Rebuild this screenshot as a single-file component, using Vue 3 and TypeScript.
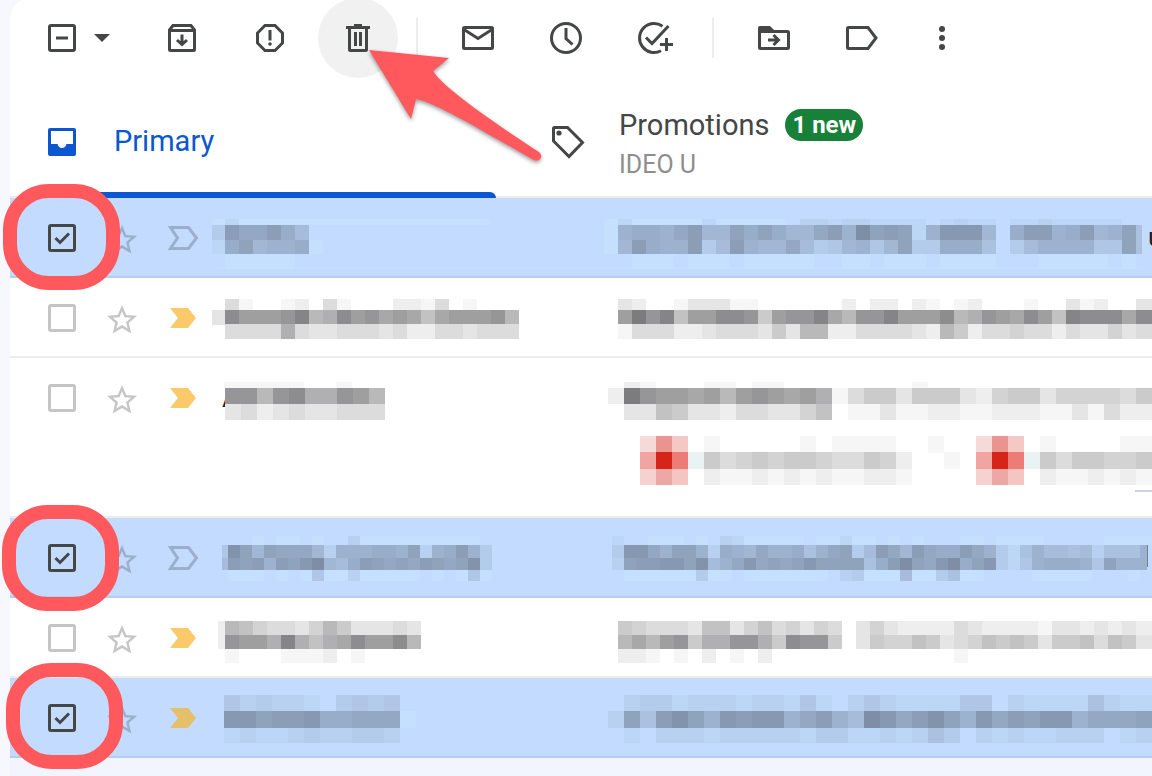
<script setup lang="ts">
import { ref } from 'vue'

interface Strip { x: number; y: number; h: number; cell: number; shades: string }
interface Mail {
  id: number
  selected: boolean
  important: boolean
  tall?: boolean
  ringShift?: string
  senderText?: string
  subjectText?: string
  sender: Strip[]
  subject: Strip[]
}

// Each character of a strip is one block: a hex digit for its darkness,
// "+" for a highlight, or a named tint from the table below.
const s = (x: number, y: number, h: number, cell: number, shades: string): Strip => ({ x, y, h, cell, shades })

const tints: Record<string, string> = {
  P: '#f6d9d9', Q: '#e9948f', R: '#f4c8c4',
  S: '#f1a5a0', T: '#d62418', U: '#eb7c76',
  V: '#f5d2d0', W: '#eda8a6', X: '#f5c5c3',
  Z: '#e9f3f4', L: '#d0d3df', K: '#75808f',
}

function shade(ch: string, selected: boolean): string {
  if (tints[ch]) return tints[ch]
  if (ch === '+') return '#c5dfff'
  const t = parseInt(ch, 16) / 15
  const from = selected ? [193, 219, 253] : [255, 255, 255]
  const to = selected ? [125, 142, 166] : [124, 124, 126]
  return `rgb(${from.map((v, i) => Math.round(v + (to[i] - v) * t)).join(',')})`
}

function blocks(strips: Strip[], selected: boolean) {
  return strips.flatMap((st) =>
    [...st.shades]
      .map((ch, i) => ({ ch, x: st.x + i * st.cell, y: st.y, w: st.cell, h: st.h }))
      .filter((b) => b.ch !== '0')
      .map((b) => ({ ...b, fill: shade(b.ch, selected) })),
  )
}

const mails = ref<Mail[]>([
  {
    id: 1, selected: true, important: false, ringShift: 'a', subjectText: 'u',
    sender: [
      s(-1, 21, 6, 14, '+1++++++++++++++++++'),
      s(-1, 27, 15, 14, '3caac96'),
      s(-1, 42, 14, 14, '19b7889+'),
      s(-1, 56, 14, 14, '0+++++'),
      s(1, 70, 1, 391, '+'),
    ],
    subject: [
      s(0, 21, 6, 14, '+1+++++1+++++0221221111012110112111110'),
      s(0, 27, 15, 14, '+8998ac77b9b977ac8fbcb18ddd709cc89c78b'),
      s(0, 42, 14, 14, '+7c988c36c877a6347847b339995036888844b'),
      s(532, 27, 29, 6, '5'),
      s(0, 56, 14, 14, '00+++0+++0+++++00++0+++0++++000+++++0+'),
      s(0, 70, 1, 538, '+'),
    ],
  },
  {
    id: 2, selected: false, important: true,
    sender: [
      s(-1, 21, 11, 14, '0410012041000221401000'),
      s(-1, 32, 15, 14, '3dbbbce89dbcaba7abbbc8'),
      s(-1, 46, 15, 14, '0444494334443422443444'),
    ],
    subject: [
      s(0, 21, 11, 14, '0320013331100000020220210120001003120033'),
      s(0, 32, 15, 14, '0bfce7bbddc6bccea8ccebbbd89cbadb7edddadd'),
      s(0, 46, 15, 14, '0144422344436388224444328624454424335344'),
    ],
  },
  {
    id: 3, selected: false, important: true, tall: true, senderText: 'A',
    sender: [
      s(12, 24, 6, 16, '1111100100'),
      s(13, 30, 16, 16, 'cc8cd99cb8'),
      s(13, 46, 16, 16, '3423433444'),
    ],
    subject: [
      s(4, 24, 6, 16, '0210001101100000000100'),
      s(4, 30, 16, 16, '2fcbbab8bcbab91466366632566355554666'),
      s(4, 46, 16, 16, '0337633244335701131122112221131422'),
      s(4, 78, 17, 16, '00PQR010000010111100100PQR01000011'),
      s(4, 94, 17, 16, '00STUZ64565665446520010STUZ6466556'),
      s(4, 111, 16, 16, '00VWX021121212112210000VWX02112121'),
      s(531, 132, 2, 40, 'L'),
    ],
  },
  {
    id: 4, selected: true, important: false, ringShift: 'b',
    sender: [
      s(10, 27, 13, 6, '4'), s(10, 40, 12, 6, '6'),
      s(16, 18, 9, 12, '00+0++0+002++++++++++'),
      s(16, 27, 13, 12, 'eb7baaa72888998b289c83'),
      s(16, 40, 12, 12, 'cbc8cbdf769cbabacbabe3'),
      s(16, 52, 11, 12, '+++0+0+4++2+++++0+0+4+'),
    ],
    subject: [
      s(8, 18, 9, 12, '100+++0+021+++++0++1++0+0+000++0++++00000++++'),
      s(8, 27, 13, 12, '3dda8bb82987a88958ab36ca7ca99ca8315866562555'),
      s(8, 40, 12, 12, '2bccddbe68adababdbbbb59cfbadf9bd314899984b88'),
      s(8, 52, 11, 12, '0++++++3++0+++++++023+++6++35++0000+++++000+'),
      s(536, 27, 25, 7, '8'),
      s(543, 27, 22, 1, 'K'),
    ],
  },
  {
    id: 5, selected: false, important: true,
    sender: [
      s(6, 23, 28, 7, '2'),
      s(13, 23, 14, 14, '87544358633343'),
      s(13, 37, 14, 14, 'cbb9e979adbbd8'),
      s(13, 51, 14, 14, '10001112010000'),
    ],
    subject: [
      s(0, 23, 14, 14, '0654443773574535403532222432222133232322'),
      s(0, 37, 14, 14, '08a8bc699cc96dcc603655763457676366747633'),
      s(0, 51, 14, 14, '022101020102000000000000010000000000000'),
    ],
  },
  {
    id: 6, selected: true, important: true, ringShift: 'c',
    sender: [
      s(12, 17, 16, 16, '42322103434'),
      s(12, 33, 17, 16, 'ddbccd99aaa+'),
      s(12, 50, 15, 16, '12112322332'),
    ],
    subject: [
      s(4, 17, 16, 16, '0233122212214102421111440211115211'),
      s(4, 33, 17, 16, '2b5ceb8dcdd8ac86fdaceb8dacbdd8aaab'),
      s(4, 50, 15, 16, '0102221222221331121253021211222012'),
    ],
  },
])
</script>

<template>
  <main class="page">
    <section class="panel">
      <div class="toolbar" role="toolbar" aria-label="Message actions">
        <span class="check">
          <input type="checkbox" aria-label="Select messages" />
          <svg viewBox="0 0 28 28"><path d="M8 14H20" /></svg>
        </span>
        <button class="caret" aria-label="Select options">
          <svg viewBox="0 0 16 8"><path d="M0 0H16L8 8Z" /></svg>
        </button>
        <button class="tool first" aria-label="Archive">
          <svg viewBox="0 0 40 40">
            <path d="M7.5 12L11 7.5H29L32.5 12V31.5Q32.5 32.5 31.5 32.5H8.5Q7.5 32.5 7.5 31.5ZM7.5 12.5H32.5" />
            <path d="M20 16.5V26M15 22L20 26.5L25 22" />
          </svg>
        </button>
        <button class="tool" aria-label="Report spam">
          <svg viewBox="0 0 40 40">
            <path d="M15 7.5H25L32.5 15V25L25 32.5H15L7.5 25V15Z" />
            <path d="M20 12V22.500" />
            <circle class="solid" cx="20" cy="26" r="1.800" />
          </svg>
        </button>
        <button class="tool hovered" aria-label="Delete">
          <svg viewBox="0 0 40 40">
            <path class="solid" d="M16 6H24V8H32V11H8V8H16Z" />
            <path d="M11.500 10V31.500Q11.500 32.500 12.500 32.500H27.500Q28.500 32.500 28.500 31.500V10M17.500 14V28M22.500 14V28" />
          </svg>
        </button>
        <span class="divider"></span>
        <button class="tool" aria-label="Mark as unread">
          <svg viewBox="0 0 40 40">
            <rect x="5.500" y="9.500" width="29" height="21" rx="1" />
            <path d="M6 11.500L20 20.500L34 11.500" />
          </svg>
        </button>
        <button class="tool" aria-label="Snooze">
          <svg viewBox="0 0 40 40">
            <circle cx="20" cy="20" r="14.500" />
            <path d="M20 10V20.500L26.500 26.500" />
          </svg>
        </button>
        <button class="tool" aria-label="Add to tasks">
          <svg viewBox="0 0 40 40">
            <path d="M28.500 8.200A14.500 14.500 0 1 0 27 32.700" />
            <path d="M12 19.500L18 25.500L34.500 8" />
            <path d="M32.500 20V33M26 26.500H39" />
          </svg>
        </button>
        <span class="divider"></span>
        <button class="tool" aria-label="Move to">
          <svg viewBox="0 0 40 40">
            <path class="solid" d="M6 8H16L20 12V14H4V10Q4 8 6 8Z" />
            <path d="M5.500 12V29.500Q5.500 30.500 6.500 30.500H33.500Q34.500 30.500 34.500 29.500V14.500Q34.500 13.500 33.500 13.500H5.500" />
            <path d="M14 22H24M19.500 17L24.500 22L19.500 27" />
          </svg>
        </button>
        <button class="tool" aria-label="Labels">
          <svg viewBox="0 0 40 40">
            <path d="M6.500 9.500H26L34 20L26 30.500H6.500Q5.500 30.500 5.500 29.500V10.500Q5.500 9.500 6.500 9.500Z" />
          </svg>
        </button>
        <button class="tool more" aria-label="More">
          <svg viewBox="0 0 40 40">
            <g class="solid"><circle cx="20" cy="11" r="3" /><circle cx="20" cy="20" r="3" /><circle cx="20" cy="29" r="3" /></g>
          </svg>
        </button>
      </div>

      <div class="tabs" role="tablist">
        <button class="tab primary" role="tab" aria-selected="true">
          <svg viewBox="0 0 32 32">
            <path fill-rule="evenodd" d="M4 2H28Q30 2 30 4V28Q30 30 28 30H4Q2 30 2 28V4Q2 2 4 2ZM5 5V18H11.500Q12.500 22 16 22Q19.500 22 20.500 18H27V5Z" />
          </svg>
          <span class="name">Primary</span>
        </button>
        <button class="tab promotions" role="tab" aria-selected="false">
          <svg viewBox="0 0 34 34">
            <path d="M3.500 2.500H16.500L31.500 17.500L18 31.500L2.500 16V3.500Q2.500 2.500 3.500 2.500Z" />
            <circle cx="8" cy="8" r="2.600" />
          </svg>
          <span class="words">
            <span class="line"><span class="name">Promotions</span><span class="badge">1 new</span></span>
            <span class="sub">IDEO U</span>
          </span>
        </button>
      </div>

      <ul class="list">
        <li v-for="m in mails" :key="m.id" class="row" :class="{ selected: m.selected, tall: m.tall }">
          <span class="check cell">
            <input v-model="m.selected" type="checkbox" :aria-label="`Select message ${m.id}`" />
            <svg v-if="m.selected" viewBox="0 0 28 28"><path d="M7.500 14L12 18.500L21 9.500" /></svg>
          </span>
          <button class="cell star" aria-label="Star">
            <svg viewBox="0 0 24 24">
              <path d="M22 9.240l-7.190-.62L12 2 9.190 8.630 2 9.240l5.460 4.730L5.820 21 12 17.270 18.180 21l-1.630-7.030L22 9.240zM12 15.400l-3.760 2.270 1-4.280-3.320-2.880 4.380-.38L12 6.100l1.710 4.040 4.380.38-3.320 2.880 1 4.280L12 15.400z" />
            </svg>
          </button>
          <button class="cell marker" :class="{ important: m.important }" aria-label="Importance">
            <svg viewBox="0 0 34 28">
              <path v-if="m.important" d="M4 4H22L30 14L22 24H4L12 14Z" />
              <path v-else d="M4.500 3.500H22.500L30.500 14L22.500 24.500H4.500L11.500 14Z" />
            </svg>
          </button>
          <svg class="lane" role="img" aria-label="Sender">
            <text v-if="m.senderText" x="10" y="49">{{ m.senderText }}</text>
            <rect v-for="(b, i) in blocks(m.sender, m.selected)" :key="i" :x="b.x" :y="b.y" :width="b.w" :height="b.h" :fill="b.fill" />
          </svg>
          <svg class="lane" role="img" aria-label="Subject">
            <rect v-for="(b, i) in blocks(m.subject, m.selected)" :key="i" :x="b.x" :y="b.y" :width="b.w" :height="b.h" :fill="b.fill" />
            <text v-if="m.subjectText" x="544" y="48">{{ m.subjectText }}</text>
          </svg>
          <span v-if="m.ringShift" class="ring" :class="m.ringShift"></span>
        </li>
      </ul>

      <svg class="pointer" viewBox="0 0 184 124" aria-hidden="true">
        <path d="M15 6L95 14L79 27C90 44 136 76 185 108Q189 112 186 115Q183 118 178 115C130 88 85 60 62 55L57 75Z" />
      </svg>
    </section>
  </main>
</template>

<style>
body {
  margin: 0;
  background: #f6f8fd;
}
</style>

<style scoped>
.page {
  box-sizing: border-box;
  display: flex;
  min-height: 100vh;
  padding-left: 10px;
  background: #f6f8fd;
  font-family: Roboto, "Liberation Sans", sans-serif;
  color: #444746;
}
.panel {
  position: relative;
  flex: 1;
  min-width: 0;
  background: #f2f5fd;
  border-top-left-radius: 14px 22px;
}
button {
  display: block;
  padding: 0;
  border: 0;
  background: none;
  color: inherit;
  font: inherit;
  text-align: left;
}
svg {
  display: block;
}
.toolbar {
  display: flex;
  align-items: center;
  height: 76px;
  padding-left: 38px;
  background: #fff;
  border-top-left-radius: 14px 22px;
}
.check {
  display: grid;
  width: 28px;
  height: 28px;
}
.check > * {
  grid-area: 1 / 1;
  width: 28px;
  height: 28px;
}
.check input {
  box-sizing: border-box;
  margin: 0;
  appearance: none;
  border: 3px solid #444746;
  border-radius: 3px;
}
.check svg {
  position: relative;
  pointer-events: none;
  fill: none;
  stroke: #444746;
  stroke-width: 3;
}
.caret {
  width: 16px;
  margin-left: 18px;
}
.caret svg {
  width: 16px;
  height: 8px;
  fill: #444746;
}
.tool {
  flex: none;
  display: grid;
  place-items: center;
  width: 80px;
  height: 80px;
  margin-right: 8px;
  border-radius: 50%;
}
.tool.first {
  margin-left: 32px;
}
.tool.hovered {
  background: #f1f1f1;
}
.tool.more {
  margin-left: -8px;
}
.tool svg {
  width: 40px;
  height: 40px;
  fill: none;
  stroke: #444746;
  stroke-width: 3;
}
.tool .solid {
  fill: #444746;
  stroke: none;
}
.divider {
  flex: none;
  width: 2px;
  height: 40px;
  margin: 0 20px 0 10px;
  background: #ececec;
}
.tabs {
  display: flex;
  height: 122px;
  background: #fff;
  box-shadow: inset 0 -2px #ececec;
}
.tab {
  position: relative;
  display: flex;
  align-items: center;
  font-size: 29px;
  line-height: 32px;
}
.primary {
  width: 504px;
  padding: 0 0 0 36px;
  color: #0b57d0;
}
.primary::after {
  content: "";
  position: absolute;
  left: 38px;
  right: 18px;
  bottom: 0;
  height: 6px;
  border-radius: 0 6px 0 0;
  background: #0b57d0;
}
.primary svg {
  width: 32px;
  height: 32px;
  margin: 10px 36px 0 0;
  fill: #0b57d0;
}
.primary .name {
  padding-top: 8px;
}
.promotions {
  padding-left: 37px;
}
.promotions svg {
  width: 34px;
  height: 34px;
  margin: 10px 34px 0 0;
  fill: none;
  stroke: #444746;
  stroke-width: 3;
}
.promotions circle {
  fill: #444746;
  stroke: none;
}
.words {
  display: flex;
  flex-direction: column;
  gap: 8px;
  padding-top: 16px;
}
.line {
  display: flex;
  align-items: center;
  gap: 16px;
}
.badge {
  padding: 0 7px;
  border-radius: 16px;
  background: #188038;
  color: #fff;
  font-size: 24px;
  font-weight: 700;
}
.sub {
  color: #8e8e8e;
  font-size: 25px;
}
.list {
  margin: 0;
  padding: 0;
  list-style: none;
}
.row {
  position: relative;
  display: grid;
  grid-template-columns: 56px 62px 46px 392px minmax(0, 1fr);
  min-height: 80px;
  padding-left: 38px;
  background: #fff;
  box-shadow: inset 0 -2px #ececec;
}
.row.selected {
  background: #c2dbff;
  box-shadow: inset 0 -2px #b5cdf0;
}
.row.tall {
  min-height: 160px;
}
.row .check {
  margin-top: 26px;
}
.row .check input {
  border-color: #c4c5c4;
}
.row.selected .check input {
  border-color: #444746;
}
.star {
  align-self: start;
  width: 36px;
  margin-top: 24px;
}
.star svg {
  width: 36px;
  height: 36px;
  fill: #c5c6c5;
}
.selected .star svg {
  fill: #9bafcc;
}
.marker {
  align-self: start;
  width: 34px;
  margin-top: 26px;
}
.marker svg {
  width: 34px;
  height: 28px;
  fill: none;
  stroke: #9bafcc;
  stroke-width: 3;
}
.marker.important svg {
  fill: #f9c96a;
  stroke: none;
}
.selected .marker.important svg {
  fill: #e5bf69;
}
.lane {
  width: 100%;
  height: 80px;
  overflow: hidden;
  shape-rendering: crispEdges;
}
.tall .lane {
  height: 160px;
}
.lane text {
  fill: #1f1f1f;
  font-size: 26px;
}
.ring {
  position: absolute;
  z-index: 1;
  top: -14px;
  left: -7px;
  box-sizing: border-box;
  width: 117px;
  height: 106px;
  border: 14px solid #ff585d;
  border-radius: 46px;
  pointer-events: none;
}
.ring.b {
  top: -13px;
  left: -8px;
}
.ring.c {
  top: -15px;
  left: -4px;
}
.pointer {
  position: absolute;
  z-index: 2;
  top: 44px;
  left: 344px;
  width: 184px;
  height: 124px;
  overflow: visible;
  pointer-events: none;
  fill: #ff585d;
  filter: drop-shadow(0 2px 2px rgba(0, 0, 0, 0.4));
}
</style>
